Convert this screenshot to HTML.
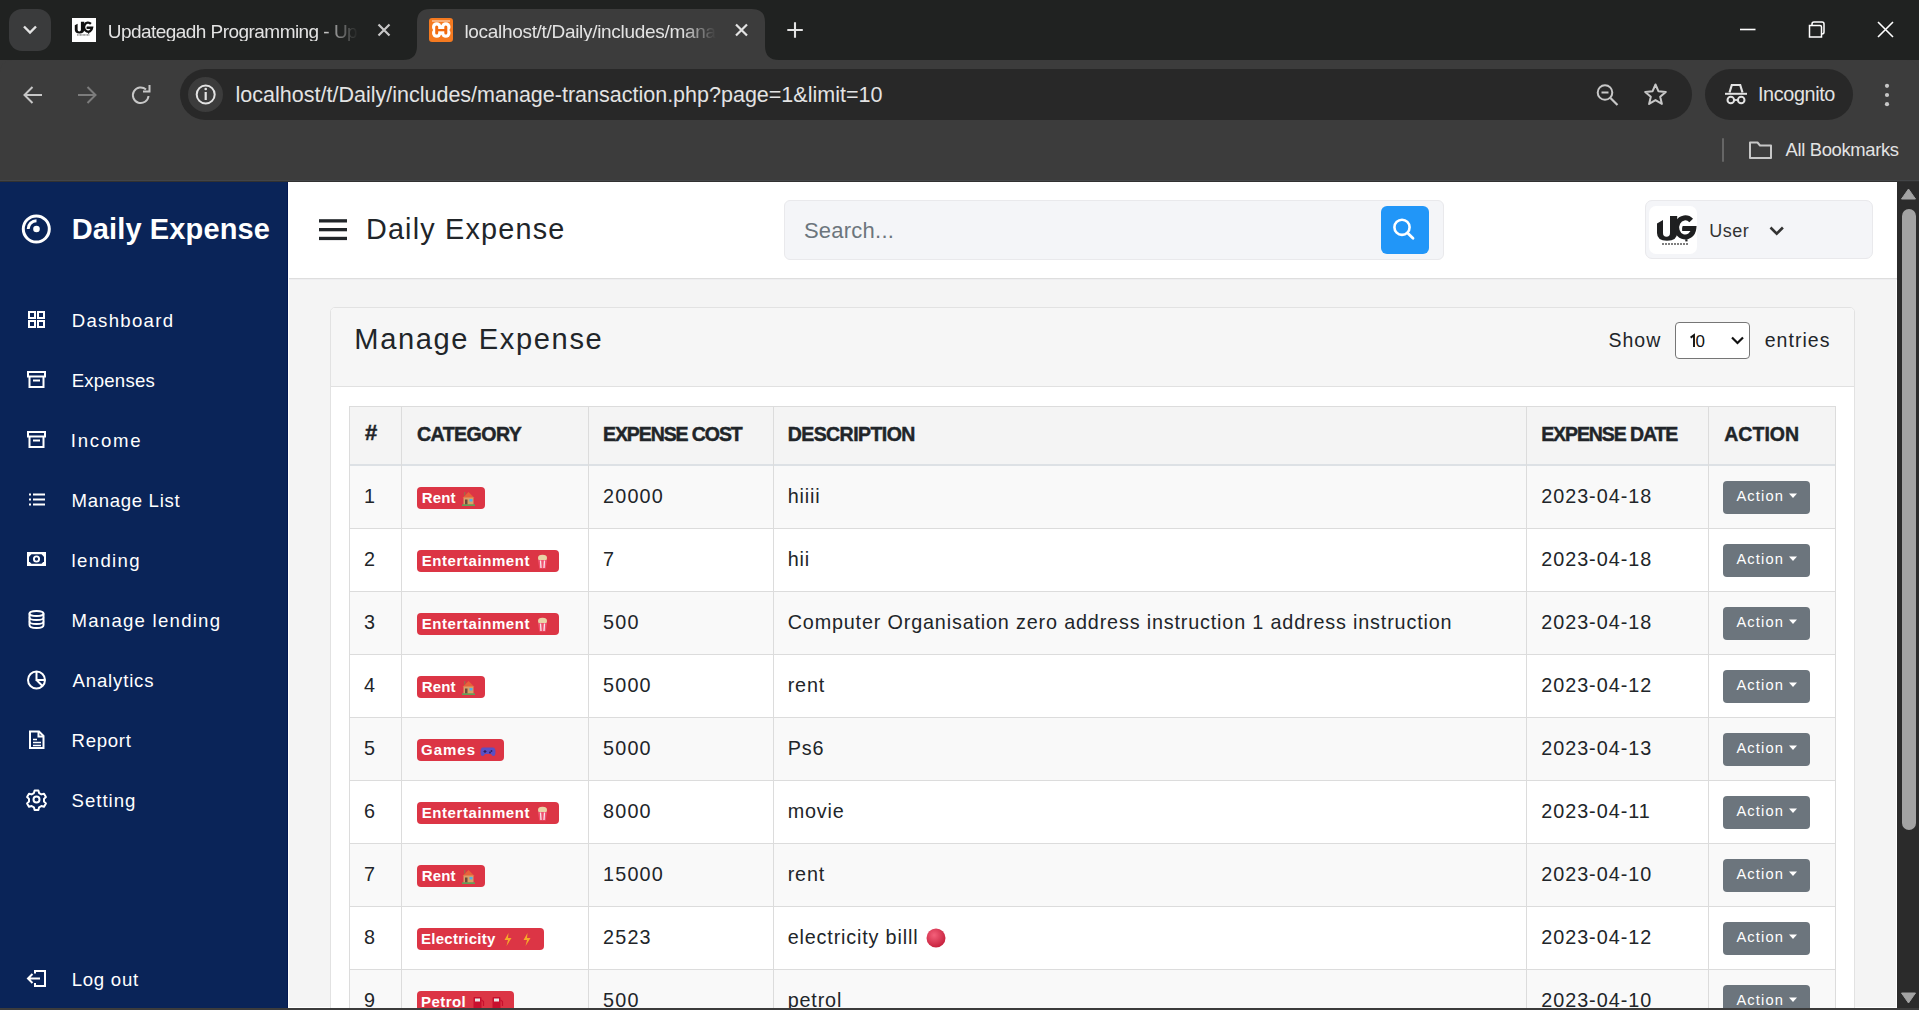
<!DOCTYPE html>
<html><head><meta charset="utf-8">
<style>
*{box-sizing:border-box}
html,body{margin:0;padding:0}
body{width:1919px;height:1010px;overflow:hidden;position:relative;background:#3c3c3c;font-family:"Liberation Sans",sans-serif}
.a{position:absolute}
.t{position:absolute;line-height:1;white-space:nowrap}
svg{position:absolute;overflow:visible}
#tabstrip{left:0;top:0;width:1919px;height:60px;background:#202221}
#toolbar{left:0;top:60px;width:1919px;height:121px;background:#3c3c3c;border-radius:12px 12px 0 0}
.ctext{color:#e3e3e3;font-size:19px}
#sidebar{left:0;top:182px;width:287px;height:826px;background:#0a2458}
.menu{color:#fff;font-size:20px}

.th{font-size:19.5px;font-weight:bold;color:#212529}
.td{font-size:20.3px;color:#212529}
.badge{height:22px;border-radius:4px;background:#dc3545}
.bt{font-size:14.5px;font-weight:bold;color:#fff}
.btn{width:87px;height:33px;border-radius:4px;background:#6c757d}
.bta{font-size:15px;color:#fff}

</style></head><body>
<div id="tabstrip" class="a"></div>
<div class="a" style="left:9px;top:9px;width:42px;height:42px;border-radius:13px;background:#3a3b3c"></div>
<svg style="left:0;top:0" width="1" height="1"><path d="M24 26.5 L30 32.5 L36 26.5" fill="none" stroke="#e3e3e3" stroke-width="2.4"/></svg>
<!-- tab1 favicon -->
<div class="a" style="left:72px;top:18px;width:24px;height:24px;background:#fff"></div>
<svg style="left:0;top:0" width="1" height="1"><g transform="translate(74.8,21.8) scale(0.47) translate(-1657,-216)">
<path d="M1657 223.5 L1663 220 V233 Q1663 236.8 1666.5 236.8 Q1670 236.8 1670 233 V216 H1677.2 V233 Q1677.2 240.7 1667 240.7 Q1657 240.7 1657 233 Z" fill="#111"/>
<path d="M1691.2 220.5 A8.6 9.6 0 1 0 1693.8 228.5 H1682.5" fill="none" stroke="#111" stroke-width="5"/>
<rect x="1682.2" y="227.3" width="11.6" height="3.6" fill="#111"/>
<rect x="1685.3" y="239.2" width="2.2" height="2.2" fill="#111"/>
<path d="M1662 244 H1689" stroke="#333" stroke-width="2" stroke-dasharray="2 1"/>
</g></svg>
<div class="t" style="left:107.75px;top:22.00px;font-size:19px;letter-spacing:-0.544px;color:#e3e3e3;width:250px;overflow:hidden;-webkit-mask-image:linear-gradient(to right,#000 212px,transparent 250px)">Updategadh Programming - Updategadh</div>
<svg style="left:0;top:0" width="1" height="1"><path d="M378.5 24.5 L389.5 35.5 M389.5 24.5 L378.5 35.5" stroke="#c7c7c7" stroke-width="2.2"/></svg>
<!-- active tab -->
<svg style="left:0;top:0" width="1" height="1"><path d="M403 60 Q417 60 417 46 L417 22 Q417 9 430 9 L752 9 Q765 9 765 22 L765 46 Q765 60 779 60 Z" fill="#3c3c3c"/></svg>
<div class="a" style="left:429px;top:18px;width:24px;height:24px;background:#f57a20;border-radius:3px"></div>
<div class="a" style="left:432px;top:20px;width:18px;height:1.6px;background:#f9b07a"></div>
<svg style="left:0;top:0" width="1" height="1">
<g fill="#fff"><circle cx="436.7" cy="26.9" r="4.7"/><circle cx="436.7" cy="33.1" r="4.7"/><circle cx="445.8" cy="26.9" r="4.7"/><circle cx="445.8" cy="33.1" r="4.7"/><rect x="436.7" y="25.2" width="9.1" height="9.6"/></g>
<g fill="#f26b10"><rect x="435.2" y="25.4" width="3" height="9.2" rx="1.5"/><rect x="444.3" y="25.4" width="3" height="9.2" rx="1.5"/><rect x="437" y="29" width="8.5" height="2.3"/></g>
</svg>
<div class="t" style="left:464.40px;top:22.00px;font-size:19px;letter-spacing:-0.307px;color:#e3e3e3;width:252px;overflow:hidden;-webkit-mask-image:linear-gradient(to right,#000 218px,transparent 252px)">localhost/t/Daily/includes/manage-transaction.php</div>
<svg style="left:0;top:0" width="1" height="1"><path d="M736 24.5 L747 35.5 M747 24.5 L736 35.5" stroke="#e3e3e3" stroke-width="2.2"/></svg>
<svg style="left:0;top:0" width="1" height="1"><path d="M795 22.3 V37.8 M787.3 30 H802.8" stroke="#e3e3e3" stroke-width="2.1"/></svg>
<!-- window controls -->
<svg style="left:0;top:0" width="1" height="1"><path d="M1740 29.5 H1755.5" stroke="#ffffff" stroke-width="1.6"/>
<path d="M1809.5 25.5 h10.5 a1.5 1.5 0 0 1 1.5 1.5 v10 h-12 z M1812 25.5 V24 a2 2 0 0 1 2 -2 h8 a2 2 0 0 1 2 2 v8 a2 2 0 0 1 -2 2 h-0.5" fill="none" stroke="#fff" stroke-width="1.5"/>
<path d="M1878 22 L1893 37 M1893 22 L1878 37" stroke="#fff" stroke-width="1.6"/></svg>
<!-- toolbar -->
<div id="toolbar" class="a"></div>
<div class="a" style="left:0;top:180px;width:1919px;height:1px;background:#434547"></div><div class="a" style="left:0;top:181px;width:1919px;height:1px;background:#313131"></div>
<svg style="left:0;top:0" width="1" height="1">
<path d="M42 95 H25.5 M32.5 87 L24.5 95 L32.5 103" fill="none" stroke="#c7c7c7" stroke-width="2"/>
<path d="M78 95 H94.5 M87.5 87 L95.5 95 L87.5 103" fill="none" stroke="#7c7c7c" stroke-width="2"/>
<path d="M148.5 96 A7.8 7.8 0 1 1 146 89.5" fill="none" stroke="#c7c7c7" stroke-width="2"/>
<path d="M149.5 85 V91.5 H143" fill="none" stroke="#c7c7c7" stroke-width="2"/>
</svg>
<div class="a" style="left:180px;top:69px;width:1512px;height:51px;border-radius:26px;background:#282828"></div>
<div class="a" style="left:188px;top:77px;width:35px;height:35px;border-radius:50%;background:#3c3c3c"></div>
<svg style="left:0;top:0" width="1" height="1">
<circle cx="205.7" cy="94.5" r="9" fill="none" stroke="#e3e3e3" stroke-width="2"/>
<path d="M205.7 92 V100" stroke="#e3e3e3" stroke-width="2.2"/><circle cx="205.7" cy="89" r="1.3" fill="#e3e3e3"/>
</svg>
<div class="t" style="left:235.60px;top:85.00px;font-size:21.5px;letter-spacing:0.003px;color:#e3e3e3;">localhost/t/Daily/includes/manage-transaction.php?page=1&amp;limit=10</div>
<svg style="left:0;top:0" width="1" height="1">
<circle cx="1605" cy="92.5" r="7.3" fill="none" stroke="#c7c7c7" stroke-width="2"/>
<path d="M1601.5 92.5 H1608.5" stroke="#c7c7c7" stroke-width="2"/>
<path d="M1610.5 98 L1617.5 105" stroke="#c7c7c7" stroke-width="2.2"/>
<path d="M1655.5 84.5 L1658.4 91.2 L1665.8 91.9 L1660.2 96.7 L1661.9 103.9 L1655.5 100.1 L1649.1 103.9 L1650.8 96.7 L1645.2 91.9 L1652.6 91.2 Z" fill="none" stroke="#c7c7c7" stroke-width="2" stroke-linejoin="round"/>
</svg>
<div class="a" style="left:1705px;top:69px;width:148px;height:51px;border-radius:26px;background:#282828"></div>
<svg style="left:0;top:0" width="1" height="1">
<path d="M1725 93.8 H1747" stroke="#e3e3e3" stroke-width="2"/>
<path d="M1729.5 92.5 L1731.8 85 H1740.2 L1742.5 92.5" fill="none" stroke="#e3e3e3" stroke-width="2.2"/>
<circle cx="1730.8" cy="100" r="3.3" fill="none" stroke="#e3e3e3" stroke-width="2"/>
<circle cx="1741.2" cy="100" r="3.3" fill="none" stroke="#e3e3e3" stroke-width="2"/>
<path d="M1734 100 H1738" stroke="#e3e3e3" stroke-width="1.8"/>
</svg>
<div class="t" style="left:1758.00px;top:85.40px;font-size:19.8px;letter-spacing:-0.375px;color:#e3e3e3;">Incognito</div>
<svg style="left:0;top:0" width="1" height="1">
<circle cx="1887" cy="85.8" r="2.1" fill="#c7c7c7"/><circle cx="1887" cy="95" r="2.1" fill="#c7c7c7"/><circle cx="1887" cy="104.2" r="2.1" fill="#c7c7c7"/>
</svg>
<div class="a" style="left:1722px;top:138px;width:2px;height:24px;background:#666;border-radius:1px"></div>
<svg style="left:0;top:0" width="1" height="1">
<path d="M1750 142.5 H1757.5 L1760 145.5 H1771 V158 H1750 Z" fill="none" stroke="#c7c7c7" stroke-width="2" stroke-linejoin="round"/>
</svg>
<div class="t" style="left:1785.50px;top:140.50px;font-size:18.4px;letter-spacing:-0.333px;color:#e3e3e3;">All Bookmarks</div>
<div id="sidebar" class="a"></div>
<svg style="left:0;top:0" width="1" height="1">
<circle cx="36.3" cy="229" r="13" fill="none" stroke="#fff" stroke-width="3"/>
<circle cx="36.5" cy="229" r="3.3" fill="#fff"/>
<path d="M28.2 229 A8.3 8.3 0 0 1 36.5 220.7" fill="none" stroke="#fff" stroke-width="2.9"/>
</svg>
<div class="t" style="left:71.80px;top:215.10px;font-size:29px;font-weight:bold;letter-spacing:0.117px;color:#fff;">Daily Expense</div>
<div class="t" style="left:71.70px;top:312.00px;font-size:18.6px;letter-spacing:1.3px;color:#fff;">Dashboard</div>
<div class="t" style="left:71.70px;top:372.00px;font-size:18.6px;letter-spacing:0.2px;color:#fff;">Expenses</div>
<div class="t" style="left:70.70px;top:432.00px;font-size:18.6px;letter-spacing:1.8px;color:#fff;">Income</div>
<div class="t" style="left:71.50px;top:492.00px;font-size:18.6px;letter-spacing:0.68px;color:#fff;">Manage List</div>
<div class="t" style="left:71.50px;top:552.00px;font-size:18.6px;letter-spacing:1.367px;color:#fff;">lending</div>
<div class="t" style="left:71.50px;top:612.00px;font-size:18.6px;letter-spacing:1.246px;color:#fff;">Manage lending</div>
<div class="t" style="left:72.50px;top:672.00px;font-size:18.6px;letter-spacing:0.825px;color:#fff;">Analytics</div>
<div class="t" style="left:71.50px;top:732.00px;font-size:18.6px;letter-spacing:0.72px;color:#fff;">Report</div>
<div class="t" style="left:71.50px;top:792.00px;font-size:18.6px;letter-spacing:1.0px;color:#fff;">Setting</div>
<div class="t" style="left:71.70px;top:971.00px;font-size:18.6px;letter-spacing:0.733px;color:#fff;">Log out</div>
<svg style="left:0;top:0" width="1" height="1" fill="none" stroke="#fff" stroke-width="2">
<!-- grid -->
<rect x="29" y="312" width="6" height="6"/><rect x="38" y="312" width="6" height="6"/>
<rect x="29" y="321" width="6" height="6"/><rect x="38" y="321" width="6" height="6"/>
<!-- archive -->
<rect x="28" y="372" width="17" height="4.5"/><path d="M29.5 376.5 V387 H43.5 V376.5"/><path d="M33 380.5 H40"/>
<rect x="28" y="432" width="17" height="4.5"/><path d="M29.5 436.5 V447 H43.5 V436.5"/><path d="M33 440.5 H40"/>
<!-- list -->
<path d="M29 494.5 H31 M29 499.5 H31 M29 504.5 H31 M33 494.5 H45 M33 499.5 H45 M33 504.5 H45"/>
<!-- money -->
<rect x="27" y="552" width="19" height="14" fill="#fff" stroke="none"/>
<path d="M31.5 554.3 H41.5 L44 556.8 V561.2 L41.5 563.7 H31.5 L29 561.2 V556.8 Z" fill="#0a2458" stroke="none"/>
<circle cx="36.5" cy="559" r="2.6" stroke-width="1.9"/>
<!-- database -->
<ellipse cx="36.5" cy="613.5" rx="7" ry="2.6"/>
<path d="M29.5 613.5 V625 Q29.5 628 36.5 628 Q43.5 628 43.5 625 V613.5"/>
<path d="M29.5 617.5 Q29.5 620 36.5 620 Q43.5 620 43.5 617.5 M29.5 621.5 Q29.5 624 36.5 624 Q43.5 624 43.5 621.5" stroke-width="1.8"/>
<!-- pie -->
<circle cx="36.5" cy="680" r="8.5"/>
<path d="M36.5 671.5 V680 H45" />
<path d="M36.5 680 L42.5 686"/>
<!-- file -->
<path d="M30 731.5 H39 L43.5 736 V748 H30 Z"/><path d="M38.5 731.5 V736.5 H43.5"/>
<path d="M33 739.5 H37 M33 742.5 H41 M33 745.5 H41" stroke-width="1.6"/>
<!-- cog -->
<path d="M34.6 790.5 h3.8 l0.7 2.6 l2.3 1.3 l2.6 -0.7 l1.9 3.3 l-1.9 1.9 v2.6 l1.9 1.9 l-1.9 3.3 l-2.6 -0.7 l-2.3 1.3 l-0.7 2.6 h-3.8 l-0.7 -2.6 l-2.3 -1.3 l-2.6 0.7 l-1.9 -3.3 l1.9 -1.9 v-2.6 l-1.9 -1.9 l1.9 -3.3 l2.6 0.7 l2.3 -1.3 z" stroke-linejoin="round"/>
<circle cx="36.5" cy="799.5" r="3"/>
<!-- logout -->
<path d="M35 973.5 V971 H45 V986 H35 V983" />
<path d="M28 978.5 H40 M32.5 974 L28 978.5 L32.5 983" />
</svg>
<!-- main -->
<div class="a" style="left:287px;top:182px;width:1px;height:826px;background:#021852"></div>
<div class="a" style="left:288px;top:182px;width:1609px;height:826px;background:#fff"></div>
<div class="a" style="left:289px;top:278px;width:1607px;height:729px;background:#f4f4f4"></div>
<div class="a" style="left:289px;top:278px;width:1608px;height:1px;background:#dedede"></div>
<div class="a" style="left:289px;top:279px;width:1608px;height:1px;background:#eeeef0"></div>
<svg style="left:0;top:0" width="1" height="1" fill="#212529">
<rect x="319" y="219.2" width="28" height="3.3"/><rect x="319" y="228" width="28" height="3.3"/><rect x="319" y="236.8" width="28" height="3.3"/>
</svg>
<div class="t" style="left:365.90px;top:215.00px;font-size:28.8px;letter-spacing:1.2px;color:#212529;">Daily Expense</div>
<div class="a" style="left:784px;top:200px;width:660px;height:60px;border:1.5px solid #e9e9ec;border-radius:6px;background:#f4f5f8"></div>
<div class="t" style="left:803.90px;top:220.00px;font-size:22px;letter-spacing:0.25px;color:#6c757d;">Search...</div>
<div class="a" style="left:1381px;top:206px;width:48px;height:48px;border-radius:6px;background:#2196f8"></div>
<svg style="left:0;top:0" width="1" height="1">
<circle cx="1402" cy="227.3" r="7.6" fill="none" stroke="#fff" stroke-width="2.6"/>
<path d="M1407.6 233 L1413 238.3" stroke="#fff" stroke-width="2.8" stroke-linecap="round"/>
</svg>
<div class="a" style="left:1645px;top:200px;width:228px;height:59px;border:1.5px solid #e9e9ec;border-radius:7px;background:#f4f5f8"></div>
<div class="a" style="left:1649px;top:206px;width:48px;height:48px;border-radius:7px;background:#fff"></div>
<svg style="left:0;top:0" width="1" height="1">
<path d="M1657 223.5 L1663 220 V233 Q1663 236.8 1666.5 236.8 Q1670 236.8 1670 233 V216 H1677.2 V233 Q1677.2 240.7 1667 240.7 Q1657 240.7 1657 233 Z" fill="#1e1f20"/>
<path d="M1691.2 220.5 A8.6 9.6 0 1 0 1693.8 228.5 H1682.5" fill="none" stroke="#1e1f20" stroke-width="5"/>
<rect x="1682.2" y="227.3" width="11.6" height="3.6" fill="#1e1f20"/>
<rect x="1685.3" y="239.2" width="2.2" height="2.2" fill="#1e1f20"/>
<path d="M1662 244 H1689" stroke="#555" stroke-width="1.4" stroke-dasharray="2 1"/>
</svg>
<div class="t" style="left:1709.30px;top:221.60px;font-size:18px;letter-spacing:0.467px;color:#333;">User</div>
<svg style="left:0;top:0" width="1" height="1"><path d="M1770.5 227.5 L1776.7 233.7 L1782.9 227.5" fill="none" stroke="#333" stroke-width="2.6"/></svg>
<div class="a" style="left:330px;top:307px;width:1525px;height:760px;border:1px solid #e2e2e2;border-radius:5px;background:#fff"></div>
<div class="a" style="left:331px;top:308px;width:1523px;height:79px;background:#f6f6f6;border-bottom:1px solid #e1e1e1;border-radius:4px 4px 0 0"></div>
<div class="t" style="left:354.30px;top:325.00px;font-size:29.1px;letter-spacing:1.615px;color:#212529;">Manage Expense</div>
<div class="t" style="left:1608.50px;top:330.80px;font-size:19.5px;letter-spacing:1.0px;color:#212529;">Show</div>
<div class="a" style="left:1675px;top:322px;width:75px;height:37px;border:1.3px solid #767676;border-radius:4px;background:#fff"></div>
<svg style="left:0;top:0" width="1" height="1"><path d="M1690.6 337.6 L1694 335.2 V347" fill="none" stroke="#111" stroke-width="1.9" stroke-linejoin="miter"/></svg>
<div class="t" style="left:1695.60px;top:332.90px;font-size:17px;letter-spacing:0.0px;color:#111;">0</div>
<svg style="left:0;top:0" width="1" height="1"><path d="M1732 337.5 L1737.5 343 L1743 337.5" fill="none" stroke="#111" stroke-width="2.2"/></svg>
<div class="t" style="left:1764.70px;top:330.80px;font-size:19.5px;letter-spacing:1.033px;color:#212529;">entries</div>
<div class="a" style="left:349px;top:406px;width:1487px;height:58px;background:#f4f4f4"></div>
<div class="a" style="left:349px;top:466px;width:1487px;height:63px;background:#f9f9f9"></div>
<div class="a" style="left:349px;top:529px;width:1487px;height:63px;background:#ffffff"></div>
<div class="a" style="left:349px;top:592px;width:1487px;height:63px;background:#f9f9f9"></div>
<div class="a" style="left:349px;top:655px;width:1487px;height:63px;background:#ffffff"></div>
<div class="a" style="left:349px;top:718px;width:1487px;height:63px;background:#f9f9f9"></div>
<div class="a" style="left:349px;top:781px;width:1487px;height:63px;background:#ffffff"></div>
<div class="a" style="left:349px;top:844px;width:1487px;height:63px;background:#f9f9f9"></div>
<div class="a" style="left:349px;top:907px;width:1487px;height:63px;background:#ffffff"></div>
<div class="a" style="left:349px;top:970px;width:1487px;height:63px;background:#f9f9f9"></div>
<div class="a" style="left:349px;top:406px;width:1487px;height:1px;background:#dcdcdc"></div>
<div class="a" style="left:349px;top:464px;width:1487px;height:2px;background:#dde1e5"></div>
<div class="a" style="left:349px;top:528px;width:1487px;height:1px;background:#dcdcdc"></div>
<div class="a" style="left:349px;top:591px;width:1487px;height:1px;background:#dcdcdc"></div>
<div class="a" style="left:349px;top:654px;width:1487px;height:1px;background:#dcdcdc"></div>
<div class="a" style="left:349px;top:717px;width:1487px;height:1px;background:#dcdcdc"></div>
<div class="a" style="left:349px;top:780px;width:1487px;height:1px;background:#dcdcdc"></div>
<div class="a" style="left:349px;top:843px;width:1487px;height:1px;background:#dcdcdc"></div>
<div class="a" style="left:349px;top:906px;width:1487px;height:1px;background:#dcdcdc"></div>
<div class="a" style="left:349px;top:969px;width:1487px;height:1px;background:#dcdcdc"></div>
<div class="a" style="left:349px;top:1032px;width:1487px;height:1px;background:#dcdcdc"></div>
<div class="a" style="left:349px;top:406px;width:1px;height:700px;background:#dcdcdc"></div>
<div class="a" style="left:401px;top:406px;width:1px;height:700px;background:#dcdcdc"></div>
<div class="a" style="left:588px;top:406px;width:1px;height:700px;background:#dcdcdc"></div>
<div class="a" style="left:773px;top:406px;width:1px;height:700px;background:#dcdcdc"></div>
<div class="a" style="left:1526px;top:406px;width:1px;height:700px;background:#dcdcdc"></div>
<div class="a" style="left:1708px;top:406px;width:1px;height:700px;background:#dcdcdc"></div>
<div class="a" style="left:1835px;top:406px;width:1px;height:700px;background:#dcdcdc"></div>
<div class="t" style="left:365.00px;top:422.20px;font-size:22px;font-weight:bold;-webkit-text-stroke:0.45px #212529;letter-spacing:0.0px;color:#212529;">#</div>
<div class="t" style="left:417.00px;top:425.20px;font-size:19.6px;font-weight:bold;-webkit-text-stroke:0.45px #212529;letter-spacing:-0.571px;color:#212529;">CATEGORY</div>
<div class="t" style="left:603.00px;top:425.20px;font-size:19.5px;font-weight:bold;-webkit-text-stroke:0.45px #212529;letter-spacing:-1.091px;color:#212529;">EXPENSE COST</div>
<div class="t" style="left:787.70px;top:425.20px;font-size:19.5px;font-weight:bold;-webkit-text-stroke:0.45px #212529;letter-spacing:-0.56px;color:#212529;">DESCRIPTION</div>
<div class="t" style="left:1541.20px;top:425.20px;font-size:19.5px;font-weight:bold;-webkit-text-stroke:0.45px #212529;letter-spacing:-1.091px;color:#212529;">EXPENSE DATE</div>
<div class="t" style="left:1724.20px;top:425.20px;font-size:19.5px;font-weight:bold;-webkit-text-stroke:0.45px #212529;letter-spacing:0.04px;color:#212529;">ACTION</div>
<div class="t" style="left:364.00px;top:487.00px;font-size:19.8px;letter-spacing:1.2px;color:#212529;">1</div>
<div class="t" style="left:603.00px;top:487.00px;font-size:19.8px;letter-spacing:1.2px;color:#212529;">20000</div>
<div class="t" style="left:787.70px;top:487.00px;font-size:19.8px;letter-spacing:0.833px;color:#212529;">hiiii</div>
<div class="t" style="left:1541.20px;top:487.00px;font-size:19.8px;letter-spacing:0.978px;color:#212529;">2023-04-18</div>
<div class="a badge" style="left:417px;top:487px;width:68px"></div>
<div class="t" style="left:421.70px;top:490.00px;font-size:15px;font-weight:bold;letter-spacing:0.2px;color:#fff;">Rent</div>
<svg style="left:461px;top:491px" width="15" height="15" viewBox="0 0 15 15"><path d="M1.5 7 L7.5 1 L13.5 7 Z" fill="#e8623a"/><rect x="2.5" y="6.5" width="10" height="7" fill="#d9a066"/><rect x="4" y="8.5" width="2.5" height="5" fill="#6b4a3a"/><rect x="8.5" y="8" width="3" height="2.5" fill="#4fb0e8"/><rect x="1" y="13.5" width="13" height="1.3" fill="#3fbf5f"/><rect x="3" y="1" width="1.3" height="3.5" fill="#a06a4a"/></svg>
<div class="a btn" style="left:1723px;top:481px"></div>
<div class="t" style="left:1736.40px;top:489.00px;font-size:14.7px;letter-spacing:1.16px;color:#fff;">Action</div>
<svg style="left:0;top:0" width="1" height="1"><path d="M1789 493.5 H1797 L1793 498 Z" fill="#fff"/></svg>
<div class="t" style="left:364.00px;top:550.00px;font-size:19.8px;letter-spacing:1.2px;color:#212529;">2</div>
<div class="t" style="left:603.00px;top:550.00px;font-size:19.8px;letter-spacing:1.2px;color:#212529;">7</div>
<div class="t" style="left:787.70px;top:550.00px;font-size:19.8px;letter-spacing:0.833px;color:#212529;">hii</div>
<div class="t" style="left:1541.20px;top:550.00px;font-size:19.8px;letter-spacing:0.978px;color:#212529;">2023-04-18</div>
<div class="a badge" style="left:417px;top:550px;width:142px"></div>
<div class="t" style="left:421.70px;top:553.00px;font-size:15px;font-weight:bold;letter-spacing:0.583px;color:#fff;">Entertainment</div>
<svg style="left:535px;top:554px" width="15" height="15" viewBox="0 0 15 15"><ellipse cx="7.5" cy="4" rx="4.5" ry="3.2" fill="#e9d3a6"/><path d="M3 6 L4.3 14.5 H10.7 L12 6 Z" fill="#f0506e"/><path d="M5.5 6.5 L6 14 M9.5 6.5 L9 14" stroke="#f7e6ea" stroke-width="1.3"/></svg>
<div class="a btn" style="left:1723px;top:544px"></div>
<div class="t" style="left:1736.40px;top:552.00px;font-size:14.7px;letter-spacing:1.16px;color:#fff;">Action</div>
<svg style="left:0;top:0" width="1" height="1"><path d="M1789 556.5 H1797 L1793 561 Z" fill="#fff"/></svg>
<div class="t" style="left:364.00px;top:613.00px;font-size:19.8px;letter-spacing:1.2px;color:#212529;">3</div>
<div class="t" style="left:603.00px;top:613.00px;font-size:19.8px;letter-spacing:1.2px;color:#212529;">500</div>
<div class="t" style="left:787.70px;top:613.00px;font-size:19.8px;letter-spacing:0.833px;color:#212529;">Computer Organisation zero address instruction 1 address instruction</div>
<div class="t" style="left:1541.20px;top:613.00px;font-size:19.8px;letter-spacing:0.978px;color:#212529;">2023-04-18</div>
<div class="a badge" style="left:417px;top:613px;width:142px"></div>
<div class="t" style="left:421.70px;top:616.00px;font-size:15px;font-weight:bold;letter-spacing:0.583px;color:#fff;">Entertainment</div>
<svg style="left:535px;top:617px" width="15" height="15" viewBox="0 0 15 15"><ellipse cx="7.5" cy="4" rx="4.5" ry="3.2" fill="#e9d3a6"/><path d="M3 6 L4.3 14.5 H10.7 L12 6 Z" fill="#f0506e"/><path d="M5.5 6.5 L6 14 M9.5 6.5 L9 14" stroke="#f7e6ea" stroke-width="1.3"/></svg>
<div class="a btn" style="left:1723px;top:607px"></div>
<div class="t" style="left:1736.40px;top:615.00px;font-size:14.7px;letter-spacing:1.16px;color:#fff;">Action</div>
<svg style="left:0;top:0" width="1" height="1"><path d="M1789 619.5 H1797 L1793 624 Z" fill="#fff"/></svg>
<div class="t" style="left:364.00px;top:676.00px;font-size:19.8px;letter-spacing:1.2px;color:#212529;">4</div>
<div class="t" style="left:603.00px;top:676.00px;font-size:19.8px;letter-spacing:1.2px;color:#212529;">5000</div>
<div class="t" style="left:787.70px;top:676.00px;font-size:19.8px;letter-spacing:0.833px;color:#212529;">rent</div>
<div class="t" style="left:1541.20px;top:676.00px;font-size:19.8px;letter-spacing:0.978px;color:#212529;">2023-04-12</div>
<div class="a badge" style="left:417px;top:676px;width:68px"></div>
<div class="t" style="left:421.70px;top:679.00px;font-size:15px;font-weight:bold;letter-spacing:0.2px;color:#fff;">Rent</div>
<svg style="left:461px;top:680px" width="15" height="15" viewBox="0 0 15 15"><path d="M1.5 7 L7.5 1 L13.5 7 Z" fill="#e8623a"/><rect x="2.5" y="6.5" width="10" height="7" fill="#d9a066"/><rect x="4" y="8.5" width="2.5" height="5" fill="#6b4a3a"/><rect x="8.5" y="8" width="3" height="2.5" fill="#4fb0e8"/><rect x="1" y="13.5" width="13" height="1.3" fill="#3fbf5f"/><rect x="3" y="1" width="1.3" height="3.5" fill="#a06a4a"/></svg>
<div class="a btn" style="left:1723px;top:670px"></div>
<div class="t" style="left:1736.40px;top:678.00px;font-size:14.7px;letter-spacing:1.16px;color:#fff;">Action</div>
<svg style="left:0;top:0" width="1" height="1"><path d="M1789 682.5 H1797 L1793 687 Z" fill="#fff"/></svg>
<div class="t" style="left:364.00px;top:739.00px;font-size:19.8px;letter-spacing:1.2px;color:#212529;">5</div>
<div class="t" style="left:603.00px;top:739.00px;font-size:19.8px;letter-spacing:1.2px;color:#212529;">5000</div>
<div class="t" style="left:787.70px;top:739.00px;font-size:19.8px;letter-spacing:0.833px;color:#212529;">Ps6</div>
<div class="t" style="left:1541.20px;top:739.00px;font-size:19.8px;letter-spacing:0.978px;color:#212529;">2023-04-13</div>
<div class="a badge" style="left:417px;top:739px;width:87px"></div>
<div class="t" style="left:421.00px;top:742.00px;font-size:15px;font-weight:bold;letter-spacing:1.0px;color:#fff;">Games</div>
<svg style="left:480px;top:743px" width="16" height="15" viewBox="0 0 16 15"><path d="M3 4.5 H13 Q15.5 4.5 15.5 9 Q15.5 13 13.5 13 Q12 13 11 11 H5 Q4 13 2.5 13 Q0.5 13 0.5 9 Q0.5 4.5 3 4.5 Z" fill="#5b4fc4"/><path d="M3.5 8.5 H6.5 M5 7 V10" stroke="#2a2060" stroke-width="1.2"/><circle cx="11.5" cy="8" r="0.9" fill="#2a2060"/><circle cx="10" cy="9.5" r="0.9" fill="#2a2060"/></svg>
<div class="a btn" style="left:1723px;top:733px"></div>
<div class="t" style="left:1736.40px;top:741.00px;font-size:14.7px;letter-spacing:1.16px;color:#fff;">Action</div>
<svg style="left:0;top:0" width="1" height="1"><path d="M1789 745.5 H1797 L1793 750 Z" fill="#fff"/></svg>
<div class="t" style="left:364.00px;top:802.00px;font-size:19.8px;letter-spacing:1.2px;color:#212529;">6</div>
<div class="t" style="left:603.00px;top:802.00px;font-size:19.8px;letter-spacing:1.2px;color:#212529;">8000</div>
<div class="t" style="left:787.70px;top:802.00px;font-size:19.8px;letter-spacing:0.833px;color:#212529;">movie</div>
<div class="t" style="left:1541.20px;top:802.00px;font-size:19.8px;letter-spacing:0.978px;color:#212529;">2023-04-11</div>
<div class="a badge" style="left:417px;top:802px;width:142px"></div>
<div class="t" style="left:421.70px;top:805.00px;font-size:15px;font-weight:bold;letter-spacing:0.583px;color:#fff;">Entertainment</div>
<svg style="left:535px;top:806px" width="15" height="15" viewBox="0 0 15 15"><ellipse cx="7.5" cy="4" rx="4.5" ry="3.2" fill="#e9d3a6"/><path d="M3 6 L4.3 14.5 H10.7 L12 6 Z" fill="#f0506e"/><path d="M5.5 6.5 L6 14 M9.5 6.5 L9 14" stroke="#f7e6ea" stroke-width="1.3"/></svg>
<div class="a btn" style="left:1723px;top:796px"></div>
<div class="t" style="left:1736.40px;top:804.00px;font-size:14.7px;letter-spacing:1.16px;color:#fff;">Action</div>
<svg style="left:0;top:0" width="1" height="1"><path d="M1789 808.5 H1797 L1793 813 Z" fill="#fff"/></svg>
<div class="t" style="left:364.00px;top:865.00px;font-size:19.8px;letter-spacing:1.2px;color:#212529;">7</div>
<div class="t" style="left:603.00px;top:865.00px;font-size:19.8px;letter-spacing:1.2px;color:#212529;">15000</div>
<div class="t" style="left:787.70px;top:865.00px;font-size:19.8px;letter-spacing:0.833px;color:#212529;">rent</div>
<div class="t" style="left:1541.20px;top:865.00px;font-size:19.8px;letter-spacing:0.978px;color:#212529;">2023-04-10</div>
<div class="a badge" style="left:417px;top:865px;width:68px"></div>
<div class="t" style="left:421.70px;top:868.00px;font-size:15px;font-weight:bold;letter-spacing:0.2px;color:#fff;">Rent</div>
<svg style="left:461px;top:869px" width="15" height="15" viewBox="0 0 15 15"><path d="M1.5 7 L7.5 1 L13.5 7 Z" fill="#e8623a"/><rect x="2.5" y="6.5" width="10" height="7" fill="#d9a066"/><rect x="4" y="8.5" width="2.5" height="5" fill="#6b4a3a"/><rect x="8.5" y="8" width="3" height="2.5" fill="#4fb0e8"/><rect x="1" y="13.5" width="13" height="1.3" fill="#3fbf5f"/><rect x="3" y="1" width="1.3" height="3.5" fill="#a06a4a"/></svg>
<div class="a btn" style="left:1723px;top:859px"></div>
<div class="t" style="left:1736.40px;top:867.00px;font-size:14.7px;letter-spacing:1.16px;color:#fff;">Action</div>
<svg style="left:0;top:0" width="1" height="1"><path d="M1789 871.5 H1797 L1793 876 Z" fill="#fff"/></svg>
<div class="t" style="left:364.00px;top:928.00px;font-size:19.8px;letter-spacing:1.2px;color:#212529;">8</div>
<div class="t" style="left:603.00px;top:928.00px;font-size:19.8px;letter-spacing:1.2px;color:#212529;">2523</div>
<div class="t" style="left:787.70px;top:928.00px;font-size:19.8px;letter-spacing:0.833px;color:#212529;">electricity billl</div>
<div class="t" style="left:1541.20px;top:928.00px;font-size:19.8px;letter-spacing:0.978px;color:#212529;">2023-04-12</div>
<div class="a badge" style="left:417px;top:928px;width:127px"></div>
<div class="t" style="left:421.00px;top:931.00px;font-size:15px;font-weight:bold;letter-spacing:0.26px;color:#fff;">Electricity</div>
<svg style="left:501px;top:932px" width="34" height="15" viewBox="0 0 34 15"><path d="M7.5 1 L3.5 8 H7 L5.5 14 L10.5 6 H7 Z" fill="#f6a829"/><path d="M26.5 1 L22.5 8 H26 L24.5 14 L29.5 6 H26 Z" fill="#f6a829"/></svg>
<svg style="left:0;top:0" width="1" height="1"><defs><radialGradient id="rg" cx="0.4" cy="0.35" r="0.7"><stop offset="0" stop-color="#f4607a"/><stop offset="1" stop-color="#c41e3a"/></radialGradient></defs><circle cx="936" cy="938" r="9.5" fill="url(#rg)"/></svg>
<div class="a btn" style="left:1723px;top:922px"></div>
<div class="t" style="left:1736.40px;top:930.00px;font-size:14.7px;letter-spacing:1.16px;color:#fff;">Action</div>
<svg style="left:0;top:0" width="1" height="1"><path d="M1789 934.5 H1797 L1793 939 Z" fill="#fff"/></svg>
<div class="t" style="left:364.00px;top:991.00px;font-size:19.8px;letter-spacing:1.2px;color:#212529;">9</div>
<div class="t" style="left:603.00px;top:991.00px;font-size:19.8px;letter-spacing:1.2px;color:#212529;">500</div>
<div class="t" style="left:787.70px;top:991.00px;font-size:19.8px;letter-spacing:0.833px;color:#212529;">petrol</div>
<div class="t" style="left:1541.20px;top:991.00px;font-size:19.8px;letter-spacing:0.978px;color:#212529;">2023-04-10</div>
<div class="a badge" style="left:417px;top:991px;width:97px"></div>
<div class="t" style="left:421.00px;top:994.00px;font-size:15px;font-weight:bold;letter-spacing:0.44px;color:#fff;">Petrol</div>
<svg style="left:471px;top:995px" width="34" height="15" viewBox="0 0 34 15"><rect x="2.5" y="2" width="8" height="12" rx="1" fill="#c8102e"/><rect x="4" y="3.5" width="5" height="3" fill="#e8e8e8"/><path d="M10.5 5 L12.5 6.5 V11" stroke="#c8102e" stroke-width="1.2" fill="none"/><rect x="21.5" y="2" width="8" height="12" rx="1" fill="#c8102e"/><rect x="23" y="3.5" width="5" height="3" fill="#e8e8e8"/><path d="M29.5 5 L31.5 6.5 V11" stroke="#c8102e" stroke-width="1.2" fill="none"/></svg>
<div class="a btn" style="left:1723px;top:985px"></div>
<div class="t" style="left:1736.40px;top:993.00px;font-size:14.7px;letter-spacing:1.16px;color:#fff;">Action</div>
<svg style="left:0;top:0" width="1" height="1"><path d="M1789 997.5 H1797 L1793 1002 Z" fill="#fff"/></svg>
<div class="a" style="left:1897px;top:182px;width:22px;height:826px;background:#2b2b2b"></div>
<div class="a" style="left:1902px;top:209px;width:13.5px;height:621px;border-radius:7px;background:#a3a3a3"></div>
<svg style="left:0;top:0" width="1" height="1"><path d="M1908.5 189 L1915.5 199 H1901.5 Z" fill="#a3a3a3" stroke="#a3a3a3" stroke-width="1" stroke-linejoin="round"/><path d="M1908.5 1003 L1915.5 993 H1901.5 Z" fill="#a3a3a3" stroke="#a3a3a3" stroke-width="1" stroke-linejoin="round"/></svg>
<div class="a" style="left:0;top:1008px;width:1919px;height:2px;background:#3c3c3c"></div>
</body></html>
